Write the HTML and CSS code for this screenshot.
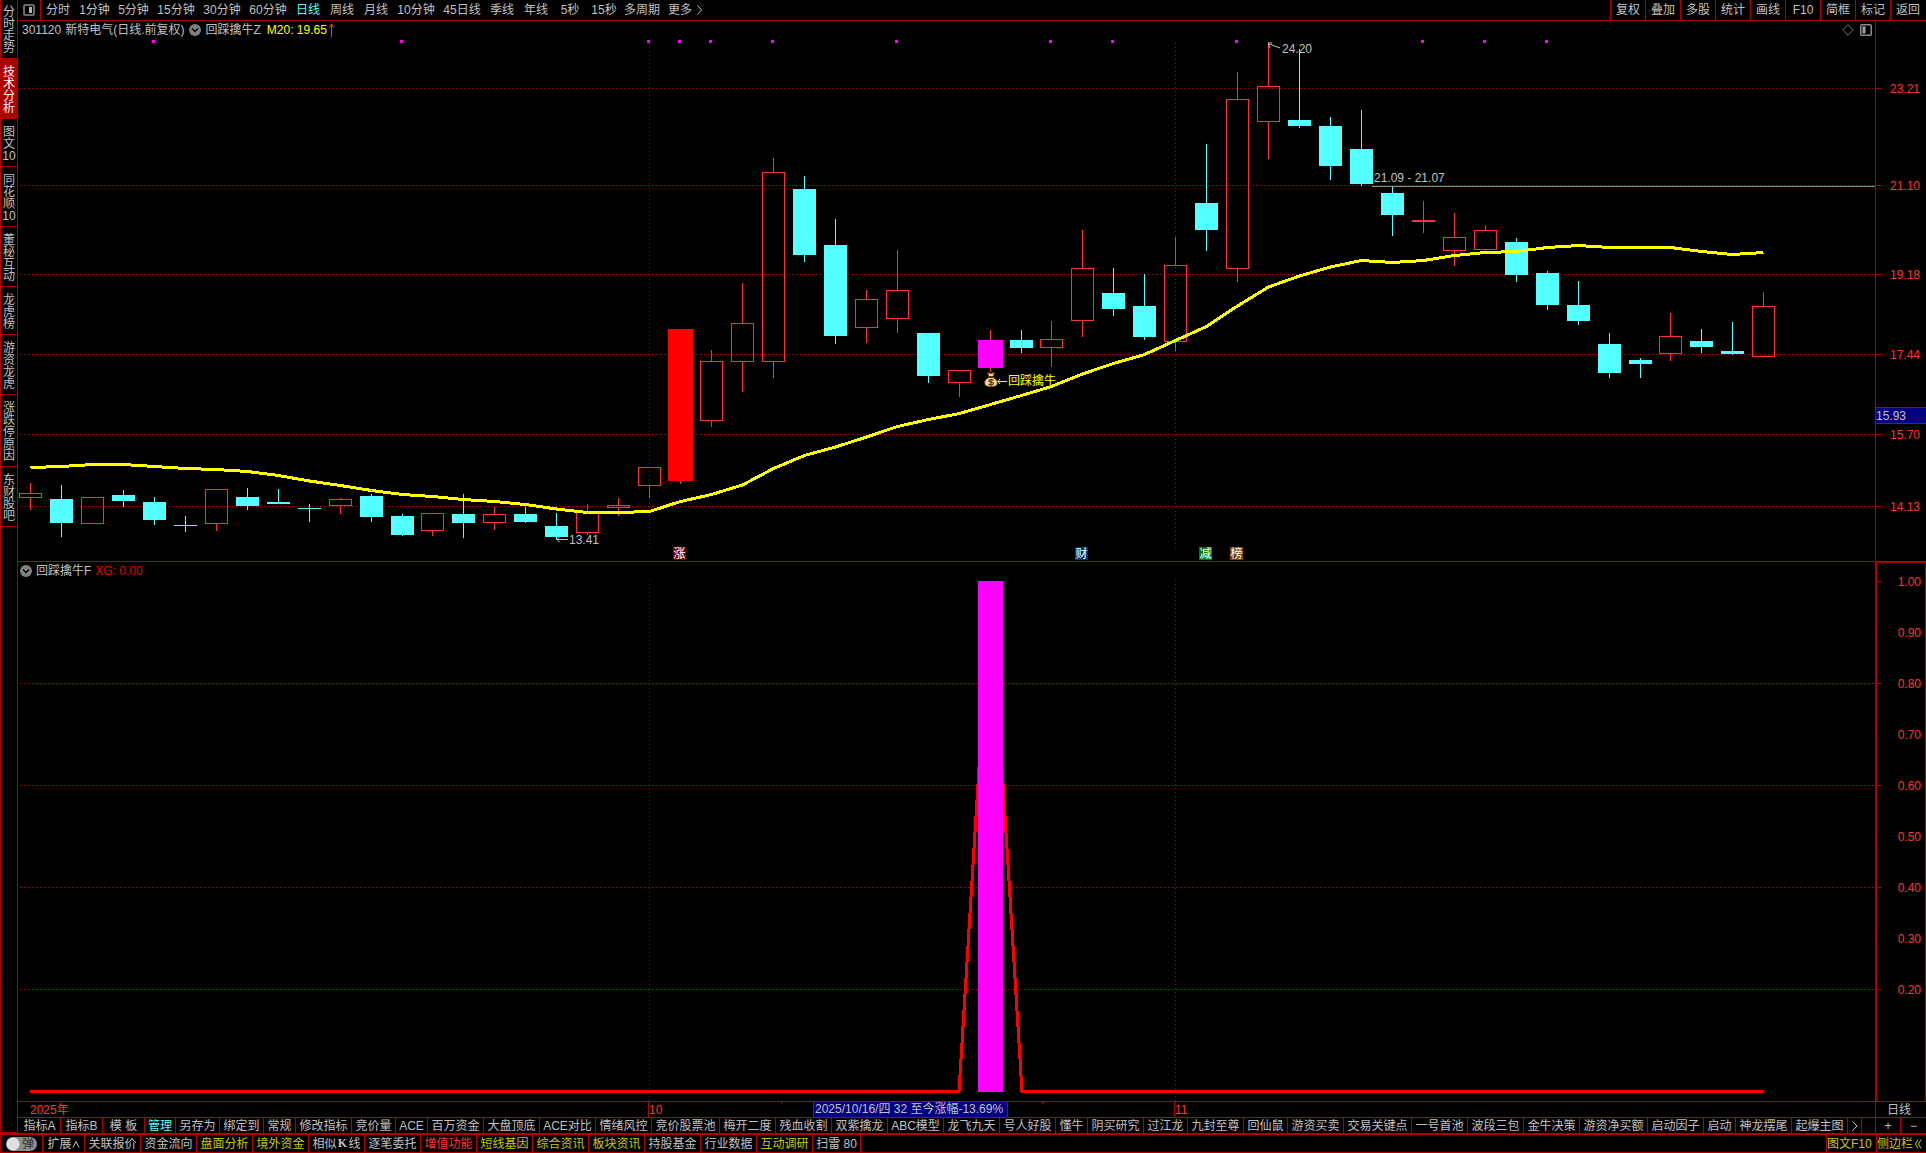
FILE: index.html
```html
<!DOCTYPE html>
<html lang="zh-CN">
<head>
<meta charset="utf-8">
<title>新特电气 301120</title>
<link rel="stylesheet" href="styles.css">
</head>
<body>
<div class="app">
  <div class="workspace">
    <nav class="side">
      <button class="side-item first">分时走势</button>
      <button class="side-item active">技术分析</button>
      <button class="side-item">图文10</button>
      <button class="side-item">同花顺10</button>
      <button class="side-item">董秘互动</button>
      <button class="side-item">龙虎榜</button>
      <button class="side-item">游资龙虎</button>
      <button class="side-item">涨跌停原因</button>
      <button class="side-item">东财股吧</button>
    </nav>
    <main class="main">
      <header class="topbar">
        <button class="layout-btn" aria-label="布局">
          <svg width="12" height="12" viewBox="0 0 12 12"><rect x="1" y="1" width="10" height="10" rx="1" fill="none" stroke="#8c8c8c" stroke-width="1.5"/><rect x="6" y="3" width="3" height="6" fill="#b4b4b4"/></svg>
        </button>
        <div class="periods">
          <button class="p2">分时</button>
          <button class="p3">1分钟</button>
          <button class="p3">5分钟</button>
          <button class="p4">15分钟</button>
          <button class="p4">30分钟</button>
          <button class="p4">60分钟</button>
          <button class="p2 on">日线</button>
          <button class="p2">周线</button>
          <button class="p2">月线</button>
          <button class="p4">10分钟</button>
          <button class="p4">45日线</button>
          <button class="p2">季线</button>
          <button class="p2">年线</button>
          <button class="p2">5秒</button>
          <button class="p2">15秒</button>
          <button class="p5">多周期</button>
          <button class="p2">更多</button>
          <svg width="5" height="10" viewBox="0 0 5 10"><path d="M0.5 0.5L4.5 5L0.5 9.5" fill="none" stroke="#c0c0c0"/></svg>
        </div>
        <div class="tools">
          <button>复权</button><button>叠加</button><button>多股</button><button>统计</button><button>画线</button><button>F10</button><button>简框</button><button>标记</button><button>返回</button>
        </div>
      </header>

      <section class="panel price">
        <div class="plot">
          <div class="info">
            <span>301120</span><span>新特电气(日线.前复权)</span>
            <svg class="drop" width="12" height="12" viewBox="0 0 12 12"><circle cx="6" cy="6" r="6" fill="#808080"/><path d="M3 4.500L6 7.500L9 4.500" fill="none" stroke="#000" stroke-width="1.300"/></svg>
            <span>回踩擒牛Z</span>
            <span class="ma">M20: 19.65</span>
            <svg class="arrow" width="5" height="14" viewBox="0 0 5 14"><path d="M2.500 14V1M0.500 4.500L2.500 1L4.500 4.500" fill="none" stroke="#ff3232"/></svg>
            <span class="corner">
              <svg width="12" height="12" viewBox="0 0 12 12"><path d="M6 0.700L11.300 6L6 11.300L0.700 6Z" fill="none" stroke="#707070"/></svg>
              <svg width="12" height="12" viewBox="0 0 12 12"><rect x="0.750" y="0.750" width="10.500" height="10.500" rx="1" fill="none" stroke="#8c8c8c" stroke-width="1.500"/><rect x="2.500" y="2.500" width="3" height="7" fill="#a0a0a0"/></svg>
            </span>
          </div>
          <div class="canvas"><svg id="price-plot"></svg></div>
        </div>
        <div class="axis"><div class="axis-head"></div><div class="canvas"><svg id="price-axis"></svg></div></div>
      </section>

      <section class="panel xg">
        <div class="plot">
          <div class="info">
            <svg class="drop" width="12" height="12" viewBox="0 0 12 12"><circle cx="6" cy="6" r="6" fill="#808080"/><path d="M3 4.500L6 7.500L9 4.500" fill="none" stroke="#000" stroke-width="1.300"/></svg>
            <span>回踩擒牛F</span>
            <span class="xg-value">XG: 0.00</span>
          </div>
          <div class="canvas"><svg id="xg-plot"></svg></div>
        </div>
        <div class="axis"><div class="axis-head"></div><div class="canvas"><svg id="xg-axis"></svg></div></div>
      </section>

      <div class="dates">
        <div class="date-plot"><svg id="date-axis"></svg></div>
        <button class="period-name">日线</button>
      </div>

      <div class="tabs">
        <button class="t-a">指标A</button><button class="t-a">指标B</button><button class="t-a">模 板</button><button class="t-m on">管理</button><button class="t3">另存为</button><button class="t3">绑定到</button><button class="t2">常规</button><button class="t4">修改指标</button><button class="t3">竞价量</button><button class="t2">ACE</button><button class="t4">百万资金</button><button class="t4">大盘顶底</button><button class="t4">ACE对比</button><button class="t4">情绪风控</button><button class="t5">竞价股票池</button><button class="t4">梅开二度</button><button class="t4">残血收割</button><button class="t4">双紫擒龙</button><button class="t4">ABC模型</button><button class="t4">龙飞九天</button><button class="t4">号人好股</button><button class="t2">懂牛</button><button class="t4">阴买研究</button><button class="t3">过江龙</button><button class="t4">九封至尊</button><button class="t3">回仙鼠</button><button class="t4">游资买卖</button><button class="t5">交易关键点</button><button class="t4">一号首池</button><button class="t4">波段三包</button><button class="t4">金牛决策</button><button class="t5">游资净买额</button><button class="t4">启动因子</button><button class="t2">启动</button><button class="t4">神龙摆尾</button><button class="t4">起爆主图</button><button class="t1" aria-label="下一页"><svg width="6" height="10" viewBox="0 0 6 10"><path d="M0.500 0.500L5 5L0.500 9.500" fill="none" stroke="#c0c0c0"/></svg></button><span class="fill"></span><button class="zoom">+</button><button class="zoom last">−</button>
      </div>
    </main>
  </div>

  <footer class="bottom">
    <label class="toggle"><input type="checkbox"><span>弹</span></label>
    <button class="t-a">扩展<svg width="8" height="8" viewBox="0 0 8 8"><path d="M1 7.500L4 1.500L7 7.500" fill="none" stroke="#c0c0c0"/></svg></button><button class="t4">关联报价</button><button class="t4">资金流向</button><button class="t4 hot">盘面分析</button><button class="t4 hot">境外资金</button><button class="t4">相似<b class="k">K</b>线</button><button class="t4">逐笔委托</button><button class="t4 red">增值功能</button><button class="t4 hot">短线基因</button><button class="t4 hot">综合资讯</button><button class="t4 hot">板块资讯</button><button class="t4">持股基金</button><button class="t4">行业数据</button><button class="t4 hot">互动调研</button><button class="t80">扫雷 80</button>
    <span class="right"><button class="hot">图文F10</button><button class="hot">侧边栏<svg width="7" height="10" viewBox="0 0 7 10"><path d="M3 0.500L0.500 5L3 9.500M6 0.500L3.500 5L6 9.500" fill="none" stroke="#c8c800"/></svg></button></span>
  </footer>
</div>
<script src="chart.js"></script>
</body>
</html>
```
FILE: styles.css
```css
* { box-sizing: border-box; }
html, body { height: 100%; }
body {
  margin: 0;
  background: #000;
  color: #c0c0c0;
  font: 12px/14px "Liberation Sans", "Noto Sans CJK SC", sans-serif;
}
button {
  margin: 0;
  padding: 0;
  border: 0;
  background: none;
  color: inherit;
  font: inherit;
  white-space: nowrap;
}
svg { display: block; flex: none; }

.app { min-height: 100%; display: flex; flex-direction: column; border-left: 1px solid #b00000; border-bottom: 1px solid #b00000; }
.workspace { flex: 1; display: flex; min-height: 0; }

/* left navigation */
.side { width: 17px; flex: none; display: flex; flex-direction: column; border-right: 1px solid #b00000; border-bottom: 2px solid #b00000; }
.side-item {
  width: 16px;
  padding: 7px 1px 4px;
  border-bottom: 1px solid #b00000;
  line-height: 12px;
  text-align: center;
  white-space: normal;
  word-break: break-all;
}
.side-item.first { padding: 6px 1px 4px; }
.side-item.active { background: #b00000; color: #fff; }

.main { flex: 1; min-width: 0; display: flex; flex-direction: column; }

/* period bar */
.topbar { height: 21px; flex: none; display: flex; border-bottom: 1px solid #b00000; }
.layout-btn { width: 23px; padding-left: 5px; border-right: 1px solid #b00000; }
.periods { flex: 1; display: flex; align-items: center; }
.p2 { width: 34px; }
.p3 { width: 39px; }
.p4 { width: 46px; }
.p5 { width: 42px; }
.on { color: #54ffff; }
.tools { display: flex; padding-right: 1px; }
.tools button { width: 35px; border-left: 1px solid #b00000; }

/* chart panels */
.panel { display: flex; min-height: 0; }
.price { flex: 540 1 0; border-bottom: 1px solid #b00000; }
.xg { flex: 539 1 0; }
.plot { flex: 1; min-width: 0; display: flex; flex-direction: column; }
.axis { width: 51px; flex: none; display: flex; flex-direction: column; border-left: 1px solid #b00000; }
.xg .axis { border: 1px solid #b00000; border-width: 1px 1px 0 2px; }
.info { height: 18px; flex: none; display: flex; align-items: center; gap: 4px; padding-left: 4px; }
.xg .info { padding-left: 1px; }
.axis-head { height: 18px; flex: none; }
.xg .axis-head { height: 17px; }
.drop { margin: 0 0 0 1px; }
.ma { color: #ff0; margin-left: 2px; }
.arrow { margin-left: -2px; }
.xg-value { color: #e00000; }
.corner { margin-left: auto; display: flex; gap: 6px; padding-right: 3px; }
.canvas { flex: 1; min-height: 0; position: relative; }
.canvas svg, .date-plot svg { position: absolute; inset: 0; width: 100%; height: 100%; overflow: visible; }
svg text { font: 12px "Liberation Sans", "Noto Sans CJK SC", sans-serif; }

/* date scale */
.dates { height: 16px; flex: none; display: flex; border-top: 1px solid #b00000; }
.date-plot { flex: 1; position: relative; }
.period-name { width: 51px; border-left: 1px solid #b00000; padding-right: 4px; }

/* indicator tabs and footer */
.tabs { height: 17px; flex: none; display: flex; padding-left: 1px; border-top: 1px solid #b00000; border-bottom: 1px solid #b00000; }
.tabs button, .bottom button { flex: none; border-right: 1px solid #b00000; }
.t1 { width: 14px; padding-left: 4px; }
.t2 { width: 32px; }
.t-m { width: 31px; }
.t3 { width: 44px; }
.t4 { width: 56px; }
.t5 { width: 68px; }
.t-a { width: 42px; }
.t80 { width: 48px; }
.fill { flex: 1; border-right: 1px solid #b00000; }
.zoom { width: 25px; }
.tabs .last { border-right: 0; }
.bottom { height: 18px; flex: none; display: flex; border-top: 1px solid #b00000; }
.bottom button { display: flex; align-items: center; justify-content: center; }
.hot { color: #c8c800; }
.red { color: #ff3232; }
.k { width: 12px; font: bold 12px "Liberation Serif", serif; }
.right { margin-left: auto; display: flex; }
.right button { width: 50px; border-right: 0; border-left: 1px solid #b00000; justify-content: flex-start; }
.right svg { margin-left: 2px; }
.toggle { width: 42px; display: flex; align-items: center; padding-left: 5px; border-right: 1px solid #b00000; position: relative; }
.toggle input {
  appearance: none;
  width: 31px;
  height: 14px;
  margin: 0;
  border-radius: 7px;
  background: radial-gradient(circle at 7px 7px, #e0e0e0 6px, #8c8c8c 7px);
}
.toggle span { position: absolute; left: 21px; color: #303030; pointer-events: none; }
```
FILE: chart.js
```js
// Kind: r hollow rise, c fall, f solid red, m magenta signal, s thin red body.
// Each row: kind, high, body top, body bottom, low (in rows of the price plot).
const bars = [
  ['r',444,454,459,471],['c',446,460,484,498],['r',458,458,485,485],['c',451,456,462,468],
  ['c',458,463,481,486],['c',477,486,487,493],['r',450,450,485,492],['c',449,458,467,471],
  ['c',450,463,465,465],['c',465,469,470,483],['r',459,460,467,475],['c',455,457,478,483],
  ['c',475,477,496,497],['r',474,474,492,497],['c',455,475,484,499],['r',468,475,484,491],
  ['c',468,475,483,484],['c',474,487,498,501],['r',465,473,494,496],['r',459,466,469,477],
  ['r',428,428,447,459],['f',290,290,442,445],['r',311,322,382,388],['r',244,284,323,353],
  ['r',119,133,323,339],['c',137,150,216,223],['c',180,206,297,305],['r',251,260,289,304],
  ['r',211,251,280,294],['c',294,294,337,344],['r',331,331,344,358],['m',291,301,329,333],
  ['c',291,301,309,314],['r',282,300,309,328],['r',191,229,282,298],['c',229,254,270,277],
  ['c',235,267,298,301],['r',198,226,303,312],['c',105,164,191,212],['r',33,60,230,243],
  ['r',4,47,83,120],['c',10,81,87,89],['c',78,87,127,141],['c',71,110,145,147],
  ['c',148,154,176,197],['s',162,181,183,194],['r',174,198,212,227],['r',186,191,211,212],
  ['c',199,203,236,243],['c',232,234,266,271],['c',242,266,282,286],['c',294,305,334,339],
  ['c',319,321,325,339],['r',274,297,315,322],['c',290,302,308,314],['c',283,312,315,316],
  ['r',253,267,318,318]
];
const ma20 = [428.5,427.5,425.5,425.5,427.5,429.5,430.5,432.5,436.5,442,446.5,451.5,455.5,457.5,
  460.5,462.5,465.5,470,473.5,473.5,472.5,462.5,455.5,446,429.5,416.5,408,398,387.5,380.5,374.5,
  365.5,356.5,347.5,335,324.5,315.5,301.5,287.5,267,248,237,228,221.5,223.5,221.5,216.5,213.5,
  212.5,208.5,206.5,208.5,208.5,208.5,212.5,215.5,213.5];
const signals = [4,12,20,21,22,24,28,33,35,39,45,47,49];
const months = [20, 37];
const prices = [['23.21',49],['21.10',146],['19.18',235],['17.44',315],['15.70',395],['14.13',467]];
const badges = [[21,'涨','#800000'],[34,'财','#003870'],[38,'减','#008000'],[39,'榜','#804000']];
const PRICE_ROWS = 522, XG_ROWS = 521, SLOTS = 60;

const column = (i, step) => Math.floor((i + 0.4) * step + 0.25);
const rect = (x, y, w, h, fill) => `<rect x="${x}" y="${y}" width="${w}" height="${h}" fill="${fill}" shape-rendering="crispEdges"/>`;
const text = (x, y, s, fill, anchor = 'start') => `<text x="${x}" y="${y}" fill="${fill}" text-anchor="${anchor}">${s}</text>`;
const dots = (x1, y1, x2, y2) => `<path d="M${x1} ${y1}L${x2} ${y2}" stroke="#b00000" stroke-dasharray="1 3" shape-rendering="crispEdges"/>`;
const line = (d, c, w = 1) => `<path d="${d}" fill="none" stroke="${c}" stroke-width="${w}"/>`;

function size(id) {
  const box = document.getElementById(id).getBoundingClientRect();
  return [Math.round(box.width), Math.round(box.height)];
}
function put(id, parts) { document.getElementById(id).innerHTML = parts.join(''); }

function moneyBag(x, y) {
  return `<g transform="translate(${x} ${y})">
    <path d="M3.500 1Q5 0.500 7 1.500Q9 0.500 10.500 1L9 4.500H5Z" fill="#ffe83a" stroke="#5a3414"/>
    <path d="M5 5.500C1.500 7 0 9.500 1 12.500C2 15.500 12 15.500 13 12.500C14 9.500 12.500 7 9 5.500Z" fill="#f4dc8c" stroke="#6a4420"/>
    <path d="M4.500 5H9.500" stroke="#5a3414" stroke-width="1.500"/>
    <path d="M9.500 8.500C8 7 4.800 7.300 4.800 9C4.800 10.700 9.500 9.700 9.500 11.500C9.500 13 6 13.300 4.500 12M7 6.800V13.800" fill="none" stroke="#5c2c20" stroke-width="1.200"/>
  </g>`;
}

function drawPrice() {
  const [w, h] = size('price-plot');
  const k = h / PRICE_ROWS, step = w / SLOTS;
  const X = i => column(i, step), Y = v => Math.round(v * k);
  const out = [];
  prices.forEach(p => out.push(dots(2, Y(p[1]) + 0.5, w, Y(p[1]) + 0.5)));
  months.forEach(i => out.push(dots(X(i) + 0.5, Y(4), X(i) + 0.5, Y(510))));
  signals.forEach(i => out.push(rect(X(i) - 2, Y(1), 3, 3, '#ff00ff')));
  bars.forEach(([kind, hi, top, bottom, lo], i) => {
    const x = X(i), t = Y(top), b = Y(bottom);
    const c = kind === 'c' ? '#54ffff' : '#ff3232';
    if (t > Y(hi)) out.push(rect(x, Y(hi), 1, t - Y(hi), c));
    if (Y(lo) > b) out.push(rect(x, b, 1, Y(lo) - b, c));
    if (kind === 'r') out.push(`<rect x="${x - 10.5}" y="${t + 0.5}" width="22" height="${b - t - 1}" fill="none" stroke="${c}" shape-rendering="crispEdges"/>`);
    else if (kind === 'f') out.push(rect(x - 12, t, 25, b - t, '#ff0000'));
    else if (kind === 'm') out.push(rect(x - 12, t, 25, b - t, '#ff00ff'));
    else out.push(rect(x - 11, t, 23, b - t, c));
  });
  const gap = Y(147) + 0.5;
  out.push(line(`M${X(43) + 11} ${gap}H${w}`, '#909090'));
  out.push(text(X(43) + 13, gap - 4.5, '21.09 - 21.07', '#c0c0c0'));
  out.push(`<path d="M${ma20.map((v, i) => `${X(i) + 0.5} ${v * k}`).join('L')}" fill="none" stroke="#ff0" stroke-width="3" stroke-linejoin="round" shape-rendering="crispEdges"/>`);
  const lowY = Y(500) + 0.5, lx = X(17);
  out.push(line(`M${lx + 12} ${lowY}H${lx + 1}M${lx + 4} ${lowY - 3}L${lx + 1} ${lowY}L${lx + 4} ${lowY + 3}`, '#c0c0c0'));
  out.push(text(lx + 13, lowY + 4, '13.41', '#c0c0c0'));
  const hx = X(40);
  out.push(line(`M${hx + 12} ${Y(9)}L${hx + 1} ${Y(5)}M${hx + 4} ${Y(4)}L${hx} ${Y(4)}L${hx + 2} ${Y(9)}`, '#c0c0c0'));
  out.push(text(hx + 14, Y(14), '24.20', '#c0c0c0'));
  const sx = X(31);
  out.push(moneyBag(sx - 6, Y(333)));
  out.push(line(`M${sx + 8} ${Y(342) + 0.5}H${sx + 17}M${sx + 10} ${Y(342) - 2}L${sx + 8} ${Y(342) + 0.5}L${sx + 10} ${Y(342) + 3}`, '#ff0'));
  out.push(text(sx + 18, Y(342) + 4, '回踩擒牛', '#ff0'));
  badges.forEach(([i, s, c]) => {
    const x = X(i) - 7;
    out.push(rect(x, Y(508), 13, 13, c), text(x + 6.5, Y(508) + 11, s, '#fff', 'middle'));
  });
  put('price-plot', out);

  const [aw] = size('price-axis'), ax = [];
  prices.forEach(p => ax.push(rect(0, Y(p[1]), 5, 1, '#b00000'), text(aw - 6, Y(p[1]) + 5, p[0], '#ff3232', 'end')));
  ax.push(rect(0, Y(368), aw, 17, '#b00000'), rect(0, Y(368) + 1, aw, 15, '#000080'), text(0, Y(368) + 13, '15.93', '#c0c0c0'));
  put('price-axis', ax);
}

function drawXg() {
  const [w, h] = size('xg-plot');
  const k = h / XG_ROWS, step = w / SLOTS;
  const X = i => column(i, step);
  const Y = v => Math.round((511 - v * 510) * k);
  const out = [];
  [0.8, 0.6, 0.4, 0.2].forEach(v => out.push(dots(2, Y(v) + 0.5, w, Y(v) + 0.5)));
  months.forEach(i => out.push(dots(X(i) + 0.5, 0, X(i) + 0.5, h)));
  const base = Y(0) + 0.5;
  out.push(`<path d="M${X(0)} ${base}H${X(30)}L${X(31) + 0.5} ${Y(1)}L${X(32) + 1} ${base}H${X(56) + 1}" fill="none" stroke="#f00" stroke-width="3" stroke-linejoin="bevel" shape-rendering="crispEdges"/>`);
  out.push(rect(X(31) - 12, Y(1), 25, Y(0) - Y(1) + 1, '#ff00ff'));
  put('xg-plot', out);

  const [aw] = size('xg-axis'), ax = [];
  for (let n = 10; n >= 2; n--) {
    const y = Y(n / 10);
    ax.push(rect(0, y, n % 2 ? 1 : 4, 1, '#b00000'), text(aw - 4, y + 5, (n / 10).toFixed(2), '#ff3232', 'end'));
  }
  put('xg-axis', ax);
}

function drawDates() {
  const [w, h] = size('date-axis');
  const step = w / SLOTS, X = i => column(i, step);
  const out = [text(X(0), 12, '2025年', '#ff3232')];
  [[20, '10'], [37, '11']].forEach(([i, s]) => out.push(rect(X(i) - 1, 0, 1, h, '#b00000'), text(X(i), 12, s, '#ff3232')));
  [24.65, 33.1].forEach(i => out.push(rect(Math.round(i * step), 0, 1, 2, '#b00000')));
  const x = Math.round(25.7 * step);
  out.push(rect(x, 0, 195, h, '#b00000'), rect(x + 1, 0, 193, h, '#000080'), text(x + 2, 11, '2025/10/16/四 32 至今涨幅-13.69%', '#c0c0c0'));
  put('date-axis', out);
}

function draw() { drawPrice(); drawXg(); drawDates(); }
draw();
addEventListener('resize', draw);
```
